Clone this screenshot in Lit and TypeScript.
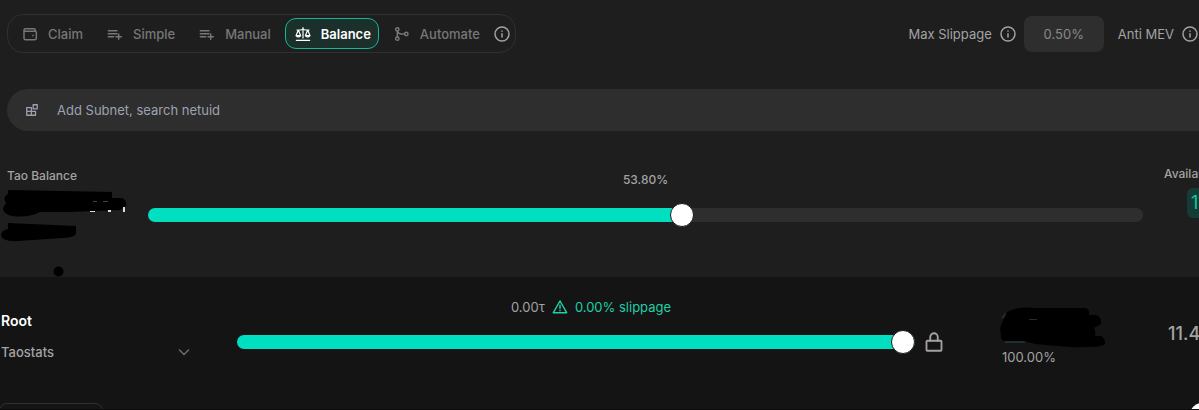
import { LitElement, html, css, svg } from "lit";
import { customElement, property, state } from "lit/decorators.js";
import { classMap } from "lit/directives/class-map.js";

const icons: Record<string, unknown> = {
  wallet: svg`<path d="M3 6v12.500a2 2 0 0 0 2 2h14.500a2 2 0 0 0 2-2V10a2 2 0 0 0-2-2H5A2 2 0 0 1 5 4h13a2 2 0 0 1 2 2v2M16.500 14v.5"/>`,
  listPlus: svg`<path d="M2 7h13M2 11.500h13M2 16h8M17.500 12v8M13.500 16h8"/>`,
  scales: svg`<path stroke-width="1.800" d="M12 2.500V18M2 21.500h20M3 6h5q2 0 4-1.500Q14 6 16 6h5M5 6 1.500 14.500h7zM19 6l-3.500 8.500h7zM1.500 14.500q3.500 4 7 0M15.500 14.500q3.500 4 7 0"/>`,
  branch: svg`<circle cx="5" cy="5" r="2.500"/><circle cx="5" cy="19" r="2.500"/><circle cx="18.500" cy="12" r="2.500"/><path d="M5 7.500v9M16 12h-4Q6.500 12 5 7.500"/>`,
  info: svg`<circle cx="12" cy="12" r="10.500"/><path d="M12 11.500v5M12 7.500v.5"/>`,
  blocks: svg`<path d="M3 8h8v13H3zM3 14.500h15V21H3M11 14.500V21M14 3h7v7h-7z"/>`,
  warning: svg`<path d="M12 3 22 20.500H2zM12 9.500v4.500M12 17v.5"/>`,
  lock: svg`<rect x="3" y="10.500" width="18" height="12" rx="1"/><path d="M7.500 10.500V6a4.500 4.500 0 0 1 9 0v4.500"/>`,
  chevron: svg`<path stroke-width="3.500" d="m3 8 9 9 9-9"/>`,
};

@customElement("ui-icon")
export class UiIcon extends LitElement {
  @property() name = "info";

  static styles = css`
    :host { display: inline-flex; flex: none; width: 16px; height: 16px; }
    svg {
      width: 100%; height: 100%; fill: none; stroke: currentColor;
      stroke-width: 2.2; stroke-linejoin: round; stroke-linecap: round;
    }
  `;

  render() {
    return html`<svg viewBox="0 0 24 24" aria-hidden="true">${icons[this.name]}</svg>`;
  }
}

@customElement("percent-slider")
export class PercentSlider extends LitElement {
  @property({ type: Number }) value = 0;
  @property() label = "";

  static styles = css`
    :host { display: block; }
    input {
      display: block; appearance: none; width: 100%; height: 24px; margin: 0;
      background: none; outline: none; --fill: 0%;
    }
    input::-webkit-slider-runnable-track {
      height: 14px; border-radius: 7px;
      background: linear-gradient(#00dfc0, #00dfc0) 0 0 / var(--fill) 100% no-repeat #2e2e2e;
    }
    input::-webkit-slider-thumb {
      appearance: none; width: 24px; height: 24px; margin-top: -5px;
      border: 1px solid #1a1a1a; border-radius: 50%; background: #fff;
    }
  `;

  render() {
    return html`<input type="range" min="0" max="100" step="0.01"
      aria-label=${this.label} .value=${String(this.value)}
      style="--fill: ${this.value}%"
      @input=${(e: Event) => (this.value = Number((e.target as HTMLInputElement).value))}>`;
  }
}

const tabs = [
  { name: "Claim", icon: "wallet" },
  { name: "Simple", icon: "listPlus" },
  { name: "Manual", icon: "listPlus" },
  { name: "Balance", icon: "scales" },
  { name: "Automate", icon: "branch" },
];

@customElement("app-root")
export class AppRoot extends LitElement {
  @state() private active = "Balance";

  static styles = css`
    :host {
      display: block; min-height: 100vh; overflow: hidden; background: #1e1e1e;
      color: #a3a3a3; font: 13px/20px Inter, "Liberation Sans", sans-serif;
    }
    * { box-sizing: border-box; }
    button, input, select { font: inherit; color: inherit; }
    .top {
      display: flex; justify-content: space-between; align-items: center;
      padding: 14px 1px 0 7px;
    }
    .tabs {
      display: flex; align-items: center; padding: 3px 5px 3px 4px;
      border: 1px solid #303030; border-radius: 16px;
    }
    .tab {
      display: flex; align-items: center; gap: 10px; height: 31px;
      padding: 0 8px 0 9px; margin-right: 5px; border: 1px solid transparent;
      border-radius: 11px; background: none; color: #777; font-weight: 500;
    }
    .tab.active {
      border-color: #14b897; background: #1b2f2b;
      color: #fff; font-weight: 600; padding-right: 7px;
    }
    .info { display: flex; padding: 0; border: 0; background: none; color: #a3a3a3; }
    .options { display: flex; align-items: center; }
    .options .info { margin-left: 8px; }
    .slippage {
      width: 80px; height: 36px; margin: 0 14px 0 8px; border: 0; border-radius: 8px;
      background: #2e2e2e; color: #888; text-align: center;
    }
    .search {
      display: flex; align-items: center; gap: 18px; height: 42px;
      margin: 36px 0 0 7px; padding-left: 18px;
      border-radius: 21px 0 0 21px; background: #2e2e2e; color: #9ca3af;
    }
    .search ui-icon { width: 14px; height: 14px; }
    .search input { flex: 1; padding: 0; border: 0; outline: none; background: none; }
    .search input::placeholder { color: #9ca3af; opacity: 1; }
    .tao {
      display: grid; grid-template-columns: 141px 1fr 56px;
      height: 146px; padding: 32px 0 0 7px;
      font-size: 12px; font-weight: 500;
    }
    .side { position: relative; padding-top: 3px; }
    .ink { position: absolute; display: block; fill: #000; }
    .ink.account { left: -7px; top: 22px; }
    .mid { padding-top: 7px; text-align: center; }
    .mid percent-slider { margin-top: 13px; }
    .available { padding: 1px 0 0 21px; white-space: nowrap; }
    .chip {
      display: block; width: 80px; height: 30px; margin: 4px 0 0 23px; padding: 0 4px;
      border-radius: 6px; background: #143c34; color: #10c9a3;
      font-size: 18px; line-height: 30px; font-weight: 400;
    }
    .root {
      display: grid; grid-template-columns: 189px 1fr 60px 193px 31px;
      height: 126px; padding-left: 1px; background: #141414;
    }
    .asset { padding-top: 34px; }
    .asset h2 { margin: 0 0 11px; color: #fff; font-size: 14px; line-height: 20px; font-weight: 600; }
    .validator { display: flex; align-items: center; font-weight: 500; }
    .validator select { flex: 1; appearance: none; border: 0; padding: 0; background: none; outline: none; }
    .validator ui-icon { width: 12px; height: 12px; color: #666; }
    .allocation { padding-top: 20px; margin-left: 47px; }
    .quote { display: flex; align-items: center; justify-content: center; gap: 7px; padding-left: 30px; }
    .green { color: #1fcfa8; }
    .allocation percent-slider { margin-top: 13px; }
    .lock { height: 20px; margin: 55px 0 0 9px; padding: 0; border: 0; background: none; text-align: left; }
    .lock ui-icon { width: 20px; height: 20px; }
    .amount { position: relative; padding: 70px 0 0 27px; }
    .ink.value { left: 23px; top: 29px; }
    .price { padding-top: 46px; font-size: 18px; font-weight: 500; line-height: 22px; white-space: nowrap; }
    .next {
      display: flex; justify-content: space-between; height: 7px; overflow: hidden;
      background: #141414; border-bottom: 1px solid #0b0b0b;
    }
    .card { width: 104px; height: 40px; margin-left: -1px; border: 1px solid #303030; border-radius: 8px; }
    .dot { width: 24px; height: 24px; margin-right: -15px; border-radius: 50%; background: #fff; }
  `;

  private info(label: string) {
    return html`<button class="info" aria-label=${label}><ui-icon name="info"></ui-icon></button>`;
  }

  render() {
    return html`
      <header class="top">
        <nav class="tabs">
          ${tabs.map((t) => html`
            <button class=${classMap({ tab: true, active: t.name === this.active })}
              @click=${() => (this.active = t.name)}>
              <ui-icon name=${t.icon}></ui-icon>${t.name}
            </button>`)}
          ${this.info("About modes")}
        </nav>
        <div class="options">
          <label for="slip">Max Slippage</label>${this.info("About slippage")}
          <input id="slip" class="slippage" value="0.50%">
          <span>Anti MEV</span>${this.info("About MEV")}
        </div>
      </header>
      <label class="search">
        <ui-icon name="blocks"></ui-icon>
        <input aria-label="Add Subnet" placeholder="Add Subnet, search netuid">
      </label>
      <section class="tao">
        <div class="side">Tao Balance
          <svg class="ink account" width="130" height="95" viewBox="0 185 130 95">
            <path d="M8 190 112 192V198H122Q129 202 125 207L120 210 70 212 40 212Q28 218 12 216 3 214 3 208L6 203Q2 197 8 194z"/>
            <path d="M8 223 76 226V234Q73 238 62 238L18 241Q2 242 1 235 2 230 8 229z"/>
            <circle cx="58.500" cy="271.500" r="5"/>
            <path fill="#ddd" d="M90 211h5v1h-5zM108 210h3v2h-3zM123 207h2v5h-2z"/>
            <path fill="#444" d="M93 201h4v1h-4zM103 201h5v1h-5z"/>
          </svg>
        </div>
        <div class="mid">53.80%<percent-slider label="Tao balance" .value=${53.8}></percent-slider></div>
        <div class="available">Available<span class="chip">11.45</span></div>
      </section>
      <section class="root">
        <div class="asset">
          <h2>Root</h2>
          <div class="validator">
            <select aria-label="Validator"><option>Taostats</option></select>
            <ui-icon name="chevron"></ui-icon>
          </div>
        </div>
        <div class="allocation">
          <div class="quote"><span>0.00τ</span><ui-icon class="green" name="warning"></ui-icon><span class="green">0.00% slippage</span></div>
          <percent-slider label="Root allocation" .value=${100}></percent-slider>
        </div>
        <button class="lock" aria-label="Lock allocation"><ui-icon name="lock"></ui-icon></button>
        <div class="amount">100.00%
          <svg class="ink value" width="108" height="44" viewBox="998 306 108 44">
            <path fill="#1c3034" d="M1005 341h20v2h-20zM1001 318l5-6v6z"/>
            <path d="M1007 312Q1018 306 1034 308H1086Q1090 310 1089 315H1096Q1102 317 1101 324L1094 328Q1096 331 1095 336H1101Q1107 340 1104 345 1095 348 1070 347L1035 344 1024 341 1006 341Q1000 341 1001 335L1000 328Q1003 320 1007 312z"/>
            <path fill="#1c3034" d="M1029 319h8v1h-8z"/>
          </svg>
        </div>
        <div class="price">11.45</div>
      </section>
      <div class="next"><div class="card"></div><div class="dot"></div></div>
    `;
  }
}
